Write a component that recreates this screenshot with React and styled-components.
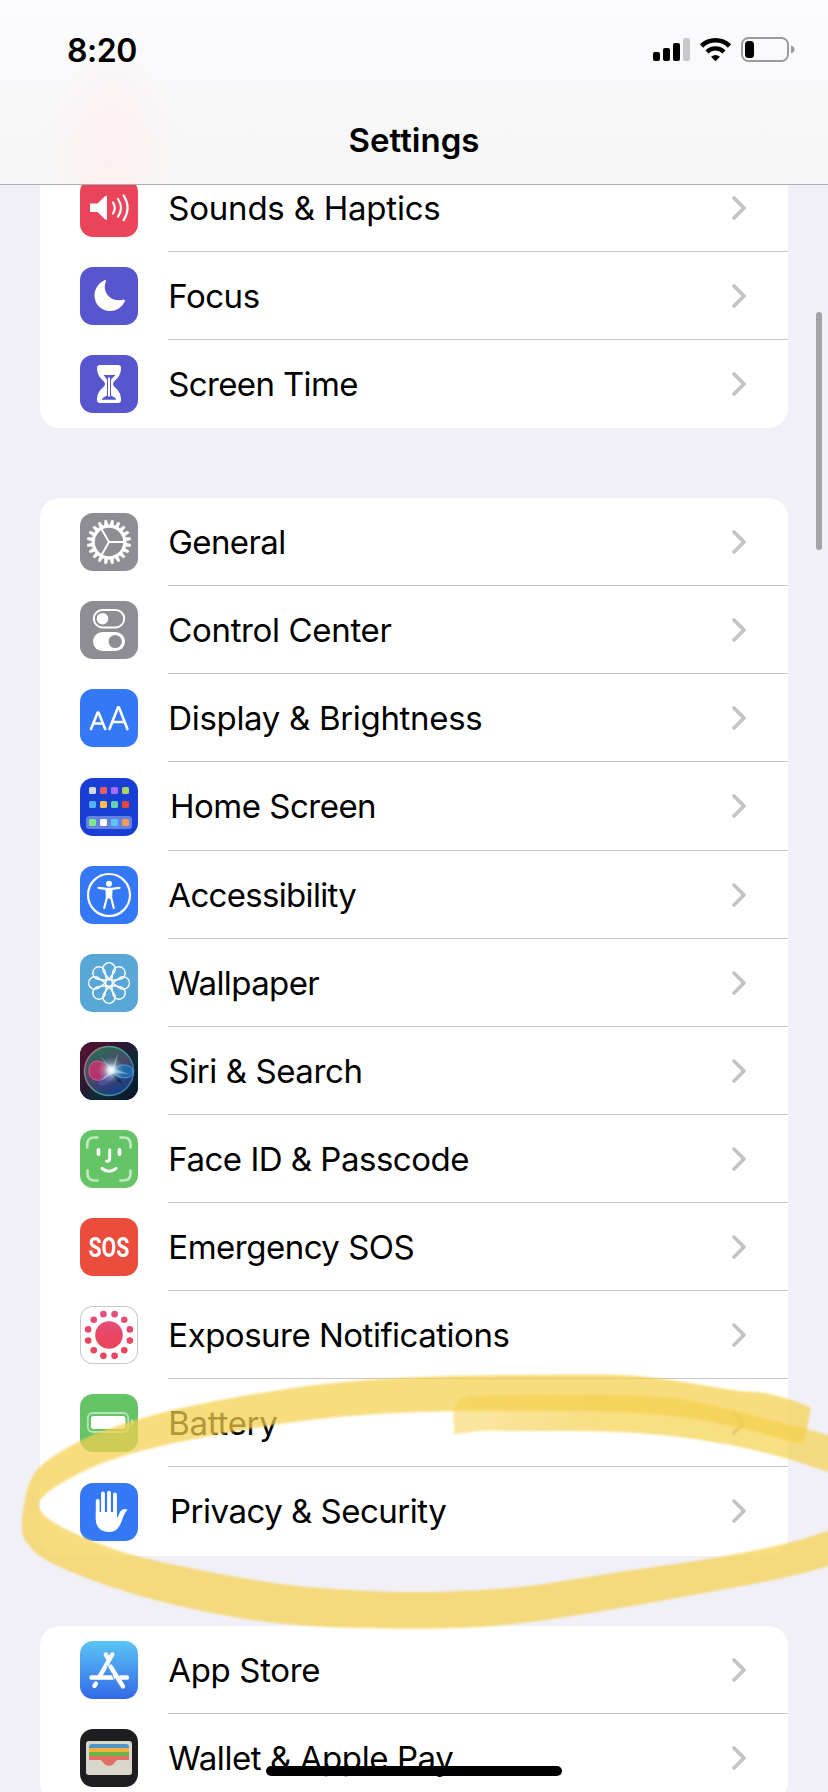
import styled, { createGlobalStyle } from "styled-components";

const font = `Inter, "Liberation Sans", sans-serif`;

const IconSvg = ({ children }) => (
    <svg width="58" height="58" viewBox="0 0 58 58" fill="none">
        {children}
    </svg>
);

const SoundsIcon = () => (
    <IconSvg>
        <path d="M11 24.5h6.5l7.5-7.2q2-1.6 2 .7v21.600q0 2.300-2 .7l-7.500-7.200H11q-1 0-1-1v-6.600q0-1 1-1z" fill="#fff" />
        <path d="M33 23.500q3.600 5.500 0 11M38 20q6 8.800 0 17.600M43.600 16.500q8 12.200 0 24.600" stroke="#fff" strokeWidth="2.200" strokeLinecap="round" />
    </IconSvg>
);

const FocusIcon = () => (
    <IconSvg>
        <path d="M24.500 13.300c1-.6 1.900.1 1.400 1.200-4 9.500 3.500 21 17 18.200 1.600-.4 2.500.4 1.900 1.700A16 16 0 0 1 30 44C21 44 14.500 37 14.500 28.500c0-6.500 4-12.500 10-15.200z" fill="#fff" />
    </IconSvg>
);

const HourglassIcon = () => (
    <IconSvg>
        <path d="M20 10h18q3 0 3 3c0 6-2.500 9.500-6.500 13q-3 3 0 6C38.500 35.500 41 38.500 41 45q0 3-3 3H20q-3 0-3-3c0-6.500 2.500-9.500 6.500-13q3-3 0-6C19.500 22.500 17 19 17 13q0-3 3-3z" fill="#fff" />
        <path d="M23.500 20h12l-4.500 4.500v16l5 3v1.200H22v-1.200l5-3v-16z" fill="#5856ce" />
        <path d="M29 22.500v19" stroke="#fff" strokeWidth="2" />
    </IconSvg>
);

const GearIcon = () => (
    <IconSvg>
        {Array.from({ length: 20 }, (_, i) => (
            <path key={i} d="M27.300 12l.7-4.800h2l.7 4.800z" fill="#fff" stroke="#fff" strokeWidth=".6" transform={`rotate(${i * 18 + 9} 29 29)`} />
        ))}
        <circle cx="29" cy="29" r="15.800" stroke="#fff" strokeWidth="3.200" />
        <path d="M29 29h15M29 29l-7.500-13M29 29l-7.500 13" stroke="#fff" strokeWidth="2" />
    </IconSvg>
);

const TogglesIcon = () => (
    <IconSvg>
        <rect x="13.800" y="9" width="30.400" height="17.400" rx="8.700" stroke="#fff" strokeWidth="2" />
        <circle cx="22.500" cy="17.700" r="5.800" fill="#fff" />
        <rect x="13" y="31" width="32" height="19" rx="9.500" fill="#fff" />
        <circle cx="35.200" cy="40.500" r="6.600" fill="#8e8d93" />
    </IconSvg>
);

const DisplayIcon = () => (
    <IconSvg>
        <path d="M11 40l6.700-16.500h.8l6.700 16.500M13.300 34.500h9.500M29.500 40l8.500-21.800h.9L47.400 40M32.300 33h12.500" stroke="#fff" strokeWidth="2.600" strokeLinecap="round" strokeLinejoin="round" />
    </IconSvg>
);

const appColors = [
    ["#d3dbe0", "#f05a62", "#a56cf6", "#add169"],
    ["#55b1fb", "#fbbe48", "#65cfaf", "#e5463c"],
    ["#7fe98a", "#ffffff", "#5ac6f8", "#f19d55"],
];

const HomeIcon = () => (
    <IconSvg>
        <rect x="6" y="38" width="46" height="13" rx="3.500" fill="#6482e2" />
        {appColors.map((row, r) =>
            row.map((color, c) => (
                <rect key={color} x={9 + c * 11} y={[9, 23, 41][r]} width="7" height="7" rx="1.600" fill={color} />
            ))
        )}
    </IconSvg>
);

const AccessibilityIcon = () => (
    <IconSvg>
        <circle cx="29" cy="29" r="21" stroke="#fff" strokeWidth="2.200" />
        <circle cx="29" cy="17.700" r="3" fill="#fff" />
        <path d="M18.500 21.800l7.500 1.100h6l7.500-1.100M26.500 23l.4 8.500-2.700 10.500M31.500 23l-.4 8.500 2.700 10.500" stroke="#fff" strokeWidth="2.200" strokeLinecap="round" strokeLinejoin="round" />
        <path d="M26 22.500h6l-.6 10h-4.800z" fill="#fff" />
    </IconSvg>
);

const WallpaperIcon = () => (
    <IconSvg>
        {Array.from({ length: 8 }, (_, i) => (
            <path key={i} d="M29 25.300L24 18.600a6.200 6.200 0 1 1 10 0z" stroke="#fff" strokeWidth="1.500" transform={`rotate(${i * 45} 29 29)`} />
        ))}
        <circle cx="29" cy="29" r="3.500" stroke="#fff" strokeWidth="1.500" />
    </IconSvg>
);

const SiriIcon = () => (
    <IconSvg>
        <defs>
            <radialGradient id="siriGlow">
                <stop offset="0" stopColor="#fff" />
                <stop offset=".25" stopColor="#e6fbff" stopOpacity=".85" />
                <stop offset=".6" stopColor="#a9d8dc" stopOpacity=".35" />
                <stop offset="1" stopColor="#9fd8e0" stopOpacity="0" />
            </radialGradient>
            <linearGradient id="siriBack" x1="0" y1="0" x2="1" y2="1">
                <stop offset="0" stopColor="#5c1030" />
                <stop offset=".45" stopColor="#251a33" />
                <stop offset=".6" stopColor="#102a35" />
                <stop offset="1" stopColor="#07152c" />
            </linearGradient>
            <linearGradient id="siriOrb" x1=".2" y1="0" x2=".7" y2="1">
                <stop offset="0" stopColor="#267055" />
                <stop offset=".5" stopColor="#4b4669" />
                <stop offset="1" stopColor="#123d88" />
            </linearGradient>
            <linearGradient id="siriRim" x1="0" y1=".2" x2="1" y2=".6">
                <stop offset="0" stopColor="#ce5c82" />
                <stop offset=".4" stopColor="#4ba681" />
                <stop offset="1" stopColor="#367fab" />
            </linearGradient>
        </defs>
        <rect width="58" height="58" fill="url(#siriBack)" />
        <circle cx="29" cy="29" r="24.500" fill="url(#siriOrb)" stroke="url(#siriRim)" strokeWidth="1.500" />
        <path d="M31 29C25 17 10 15 9 28s16 14 22 1z" fill="#d92f6d" fillOpacity=".75" stroke="#e65c93" />
        <path d="M31 29c-8 3-15 8-12 13s13-2 16-9z" fill="#6758ba" fillOpacity=".5" />
        <path d="M31 29c8-9 21-7 22 0s-12 11-22 0z" fill="#1e72bc" fillOpacity=".8" stroke="#50a5e0" />
        <path d="M31 30q6 3 12 12q-8-3-12-12" fill="#142749" />
        <path d="M31 28.500L20 14l12 12L38 11l-3 16 14 5-15-1-14 8z" fill="#d8f5f2" fillOpacity=".45" />
        <circle cx="31" cy="28" r="13" fill="url(#siriGlow)" />
    </IconSvg>
);

const FaceIcon = () => (
    <IconSvg>
        <path d="M7.300 17.500v-3q0-7 7-7h3M40.500 7.500h3q7 0 7 7v3M50.500 40.500v3q0 7-7 7h-3M17.500 50.500h-3q-7 0-7-7v-3" stroke="#c1e8c2" strokeWidth="2.700" strokeLinecap="round" />
        <path d="M18.500 20v4M39.500 20v4" stroke="#fff" strokeWidth="3.800" strokeLinecap="round" />
        <path d="M29.700 20v8.500q0 2.700-2.700 2.700h-.5M22 38.500q7 5.600 14 0" stroke="#fff" strokeWidth="2.900" strokeLinecap="round" />
    </IconSvg>
);

const SosIcon = () => <SosText>SOS</SosText>;

const ExposureIcon = () => (
    <IconSvg>
        <defs>
            <linearGradient id="exposure" x1="0" y1="0" x2="0" y2="58" gradientUnits="userSpaceOnUse">
                <stop stopColor="#e0558a" />
                <stop offset=".55" stopColor="#ea4560" />
                <stop offset="1" stopColor="#ea4458" />
            </linearGradient>
        </defs>
        <circle cx="29" cy="29" r="13.800" fill="url(#exposure)" />
        {Array.from({ length: 12 }, (_, i) => {
            const a = ((i * 30 + 15) * Math.PI) / 180;
            return <circle key={i} cx={29 + 21.600 * Math.cos(a)} cy={29 + 21.600 * Math.sin(a)} r="3.300" fill="url(#exposure)" />;
        })}
    </IconSvg>
);

const BatteryIcon = () => (
    <IconSvg>
        <rect x="7.800" y="19" width="40.500" height="19" rx="5" stroke="#b9e4b9" strokeWidth="1.800" />
        <rect x="11" y="22" width="34.500" height="13" rx="2.500" fill="#fff" />
        <path d="M51 25q3 1 3 3.300T51 31.500z" fill="#b9e4b9" />
    </IconSvg>
);

const HandIcon = () => (
    <IconSvg>
        <path d="M17.700 18v18M23 10.500V32M29 9.700V32M35 11.500V33" stroke="#fff" strokeWidth="3.800" strokeLinecap="round" />
        <path d="M15.800 29H37v6.500l3-6.500c1.500-2.500 4-3.700 6.600-2.800.9.300.7 1 .1 1.600-2 2-3.200 5.500-4.700 9.500C39.500 44.500 36 49 29.500 49 21 49 15.800 44.500 15.800 36z" fill="#fff" />
    </IconSvg>
);

const AppStoreIcon = () => (
    <IconSvg>
        <path d="M25.800 13.500l3.200 5.300M32.300 13.500l-13 22.500M30.500 25.500l12.500 20M15.900 42.600l-1.500 2.400" stroke="#fff" strokeWidth="4.400" strokeLinecap="round" />
        <path d="M11.500 36.500H33M41 36.500h6" stroke="#fff" strokeWidth="4.400" strokeLinecap="round" />
        <path d="M30 21.500l8.500 15.500" stroke="#4a9bf0" strokeWidth="1" transform="translate(-3.300 3)" />
    </IconSvg>
);

const WalletIcon = () => (
    <IconSvg>
        <rect x="6" y="12" width="46" height="34" rx="3" fill="#d9d6cc" />
        <path d="M9 18q0-3 3-3h34q3 0 3 3v2H9z" fill="#4f96c6" />
        <path d="M9 19h40v4.500H9z" fill="#f0b13e" />
        <path d="M9 23h40v4.500H9z" fill="#6fb447" />
        <path d="M9 27h40v4H9z" fill="#df7063" />
        <path d="M19 30.500c4 0 4 6.200 10 6.200s6-6.200 10-6.200z" fill="#df7063" />
    </IconSvg>
);

const groups = [
    [
        { label: "Sounds & Haptics", color: "#ea445a", icon: SoundsIcon, tracking: -0.22 },
        { label: "Focus", color: "#5856ce", icon: FocusIcon },
        { label: "Screen Time", color: "#5856ce", icon: HourglassIcon, tracking: -0.65 },
    ],
    [
        { label: "General", color: "#8e8d93", icon: GearIcon, tracking: -0.6 },
        { label: "Control Center", color: "#8e8d93", icon: TogglesIcon, tracking: -0.35 },
        { label: "Display & Brightness", color: "#3478f6", icon: DisplayIcon, tracking: -0.32 },
        { label: "Home Screen", color: "#193ed3", icon: HomeIcon, tall: true },
        { label: "Accessibility", color: "#3478f6", icon: AccessibilityIcon, tracking: -0.68 },
        { label: "Wallpaper", color: "#59a7d7", icon: WallpaperIcon, tracking: -0.6 },
        { label: "Siri & Search", color: "#17182c", icon: SiriIcon, tracking: -0.4 },
        { label: "Face ID & Passcode", color: "#65c466", icon: FaceIcon },
        { label: "Emergency SOS", color: "#eb4d3d", icon: SosIcon },
        { label: "Exposure Notifications", color: "#fff", icon: ExposureIcon, outlined: true },
        { label: "Battery", color: "#65c466", icon: BatteryIcon, tracking: -0.3 },
        { label: "Privacy & Security", color: "#3478f6", icon: HandIcon, tall: true },
    ],
    [
        { label: "App Store", color: "linear-gradient(#5bc5f5, #3369e7)", icon: AppStoreIcon, tracking: -0.35 },
        { label: "Wallet & Apple Pay", color: "#1e1e20", icon: WalletIcon, tracking: -0.42 },
    ],
];

const Chevron = () => (
    <svg width="16" height="26" viewBox="0 0 16 26" fill="none">
        <path d="M3 3l10 10L3 23" stroke="#c4c4c6" strokeWidth="3.800" strokeLinecap="round" strokeLinejoin="round" />
    </svg>
);

const SettingsRow = ({ item }) => {
    const Icon = item.icon;
    return (
        <Row $tall={item.tall}>
            <Tile $color={item.color} $outlined={item.outlined}>
                <Icon />
            </Tile>
            <RowBody $tall={item.tall}>
                <Label $tracking={item.tracking}>{item.label}</Label>
                <Chevron />
            </RowBody>
        </Row>
    );
};

const StatusIcons = () => (
    <svg width="144" height="28" viewBox="652 36 144 28" fill="none">
        <rect x="653" y="52" width="7" height="9" rx="2" fill="#000" />
        <rect x="663" y="48" width="7" height="13" rx="2" fill="#000" />
        <rect x="673" y="43" width="7" height="18" rx="2" fill="#000" />
        <rect x="683" y="38" width="7" height="23" rx="2" fill="#c8c8ca" />
        <path d="M701.500 46a20 20 0 0 1 28 0" stroke="#000" strokeWidth="4.600" />
        <path d="M707 52a12 12 0 0 1 17 0" stroke="#000" strokeWidth="4.300" />
        <path d="M711 56.700q4.500-3.400 9 0l-4.500 4.500z" fill="#000" />
        <rect x="742" y="38" width="46" height="23" rx="6.500" stroke="#9b9b9d" strokeWidth="2" />
        <rect x="745" y="41" width="9" height="17" rx="3.500" fill="#000" />
        <path d="M791 45.500q3.500 1.200 3.500 4t-3.500 4z" fill="#9b9b9d" />
    </svg>
);

// turns a list of edge points into a closed curve
const smooth = (pts) => {
    const n = pts.length;
    let d = `M${pts[0]}`;
    for (let i = 0; i < n; i++) {
        const [p0, p1, p2, p3] = [-1, 0, 1, 2].map((k) => pts[(i + k + n) % n]);
        d += `C${p1[0] + (p2[0] - p0[0]) / 6} ${p1[1] + (p2[1] - p0[1]) / 6} ${p2[0] - (p3[0] - p1[0]) / 6} ${p2[1] - (p3[1] - p1[1]) / 6} ${p2}`;
    }
    return d + "Z";
};

const loopEdge = [
    [850, 1524], [828, 1531], [788, 1543], [720, 1557], [620, 1572], [520, 1587], [420, 1592],
    [333, 1589], [267, 1582], [200, 1570], [133, 1555], [83, 1537], [50, 1520], [39, 1506], [45, 1495],
    [67, 1480], [100, 1464], [145, 1450], [200, 1438], [280, 1424], [350, 1416], [420, 1412], [487, 1411],
    [550, 1411], [620, 1412], [680, 1417], [740, 1428], [799, 1443], [804, 1440], [810, 1412], [807, 1406],
    [770, 1394], [733, 1390], [670, 1380], [620, 1375], [520, 1375], [420, 1377], [333, 1383], [267, 1392],
    [200, 1404], [150, 1416], [100, 1432], [67, 1448], [42, 1465], [30, 1482], [24, 1505], [22, 1530],
    [28, 1544], [48, 1561], [100, 1583], [167, 1603], [240, 1618], [310, 1626], [380, 1628.500], [460, 1628],
    [530, 1622], [620, 1608], [720, 1590], [787, 1577], [828, 1566], [850, 1559],
];

const tailEdge = [
    [460, 1399], [520, 1395], [620, 1395], [680, 1399], [740, 1412], [803, 1428], [828, 1435], [850, 1442],
    [850, 1480], [828, 1472], [788, 1459], [740, 1447], [680, 1437], [620, 1432], [560, 1431], [520, 1431],
    [480, 1431], [457, 1434], [454, 1431],
];

const Highlighter = () => (
    <MarkerSvg viewBox="0 0 828 1792">
        <defs>
            <linearGradient id="tailFade" x1="452" x2="600" y1="0" y2="0" gradientUnits="userSpaceOnUse">
                <stop stopColor="#f5d04d" stopOpacity=".52" />
                <stop offset="1" stopColor="#f5d04d" stopOpacity=".7" />
            </linearGradient>
            <filter id="soft">
                <feGaussianBlur stdDeviation=".8" />
            </filter>
        </defs>
        <g filter="url(#soft)">
            <path d={smooth(loopEdge)} fill="#f5d04d" fillOpacity=".72" />
            <path d={smooth(tailEdge)} fill="url(#tailFade)" />
        </g>
    </MarkerSvg>
);

const App = () => {
    return (
        <Screen>
            <GlobalStyle />
            <List>
                {groups.map((items) => (
                    <Group key={items[0].label}>
                        {items.map((item) => (
                            <SettingsRow key={item.label} item={item} />
                        ))}
                    </Group>
                ))}
            </List>
            <Header>
                <StatusBar>
                    <Time>8:20</Time>
                    <StatusIcons />
                </StatusBar>
                <Title>Settings</Title>
            </Header>
            <ScrollThumb />
            <Highlighter />
            <HomeIndicator />
        </Screen>
    );
};

const GlobalStyle = createGlobalStyle`
  body {
    margin: 0;
    background-color: #f1f0f6;
  }
  * {
    box-sizing: border-box;
  }
`;

const Screen = styled.div`
  position: relative;
  width: 828px;
  height: 1792px;
  overflow: hidden;
  background-color: #f1f0f6;
  font-family: ${font};
  color: black;
`;

const Header = styled.header`
  position: absolute;
  top: 0;
  left: 0;
  width: 100%;
  height: 185px;
  border-bottom: 1px solid #adadaf;
  background:
    radial-gradient(ellipse 70px 110px at 112px 150px, #fdf0f0, transparent),
    linear-gradient(#fbfbfd, #f9f9fb 45%, #f7f7f7 80%);
`;

const StatusBar = styled.div`
  display: flex;
  justify-content: space-between;
  align-items: center;
  height: 100px;
  padding: 0 32px 0 67px;
`;

const Time = styled.span`
  font-size: 32px;
  font-weight: 600;
  letter-spacing: -0.5px;
`;

const Title = styled.h1`
  margin: 20px 0 0;
  font-size: 33px;
  line-height: 40px;
  font-weight: 600;
  text-align: center;
  letter-spacing: 0;
`;

const List = styled.main`
  display: flex;
  flex-direction: column;
  gap: 70px;
  padding: 164px 40px 0;
`;

const Group = styled.section`
  border-radius: 20px;
  background-color: white;
  overflow: hidden;
`;

const RowBody = styled.div`
  display: flex;
  align-items: center;
  justify-content: space-between;
  flex: 1;
  height: 100%;
  padding-right: 41px;
  padding-left: ${({ $tall }) => ($tall ? "2px" : "0.3px")};
  border-bottom: 1px solid #c6c6c8;
`;

const Row = styled.div`
  display: flex;
  align-items: center;
  gap: 30px;
  height: ${({ $tall }) => ($tall ? "89px" : "88px")};
  padding-left: 40px;
  &:last-child ${RowBody} {
    border-color: transparent;
  }
`;

const Tile = styled.div`
  display: flex;
  align-items: center;
  justify-content: center;
  flex: none;
  width: 58px;
  height: 58px;
  border-radius: 13px;
  overflow: hidden;
  background: ${({ $color }) => $color};
  box-shadow: ${({ $outlined }) => ($outlined ? "inset 0 0 0 1px #c9c9cb" : "none")};
`;

const SosText = styled.span`
  font-family: Roboto, sans-serif;
  font-size: 28px;
  font-weight: 700;
  color: white;
  transform: scaleX(0.76);
`;

const Label = styled.span`
  font-size: 33px;
  white-space: nowrap;
  letter-spacing: ${({ $tracking = -0.5 }) => $tracking}px;
`;

const ScrollThumb = styled.div`
  position: absolute;
  top: 312px;
  right: 6px;
  width: 6px;
  height: 238px;
  border-radius: 3px;
  background-color: #a2a2a7;
`;

const MarkerSvg = styled.svg`
  position: absolute;
  inset: 0;
  pointer-events: none;
`;

const HomeIndicator = styled.div`
  position: absolute;
  left: 266px;
  bottom: 16px;
  width: 296px;
  height: 10px;
  border-radius: 5px;
  background-color: black;
`;

export default App;
